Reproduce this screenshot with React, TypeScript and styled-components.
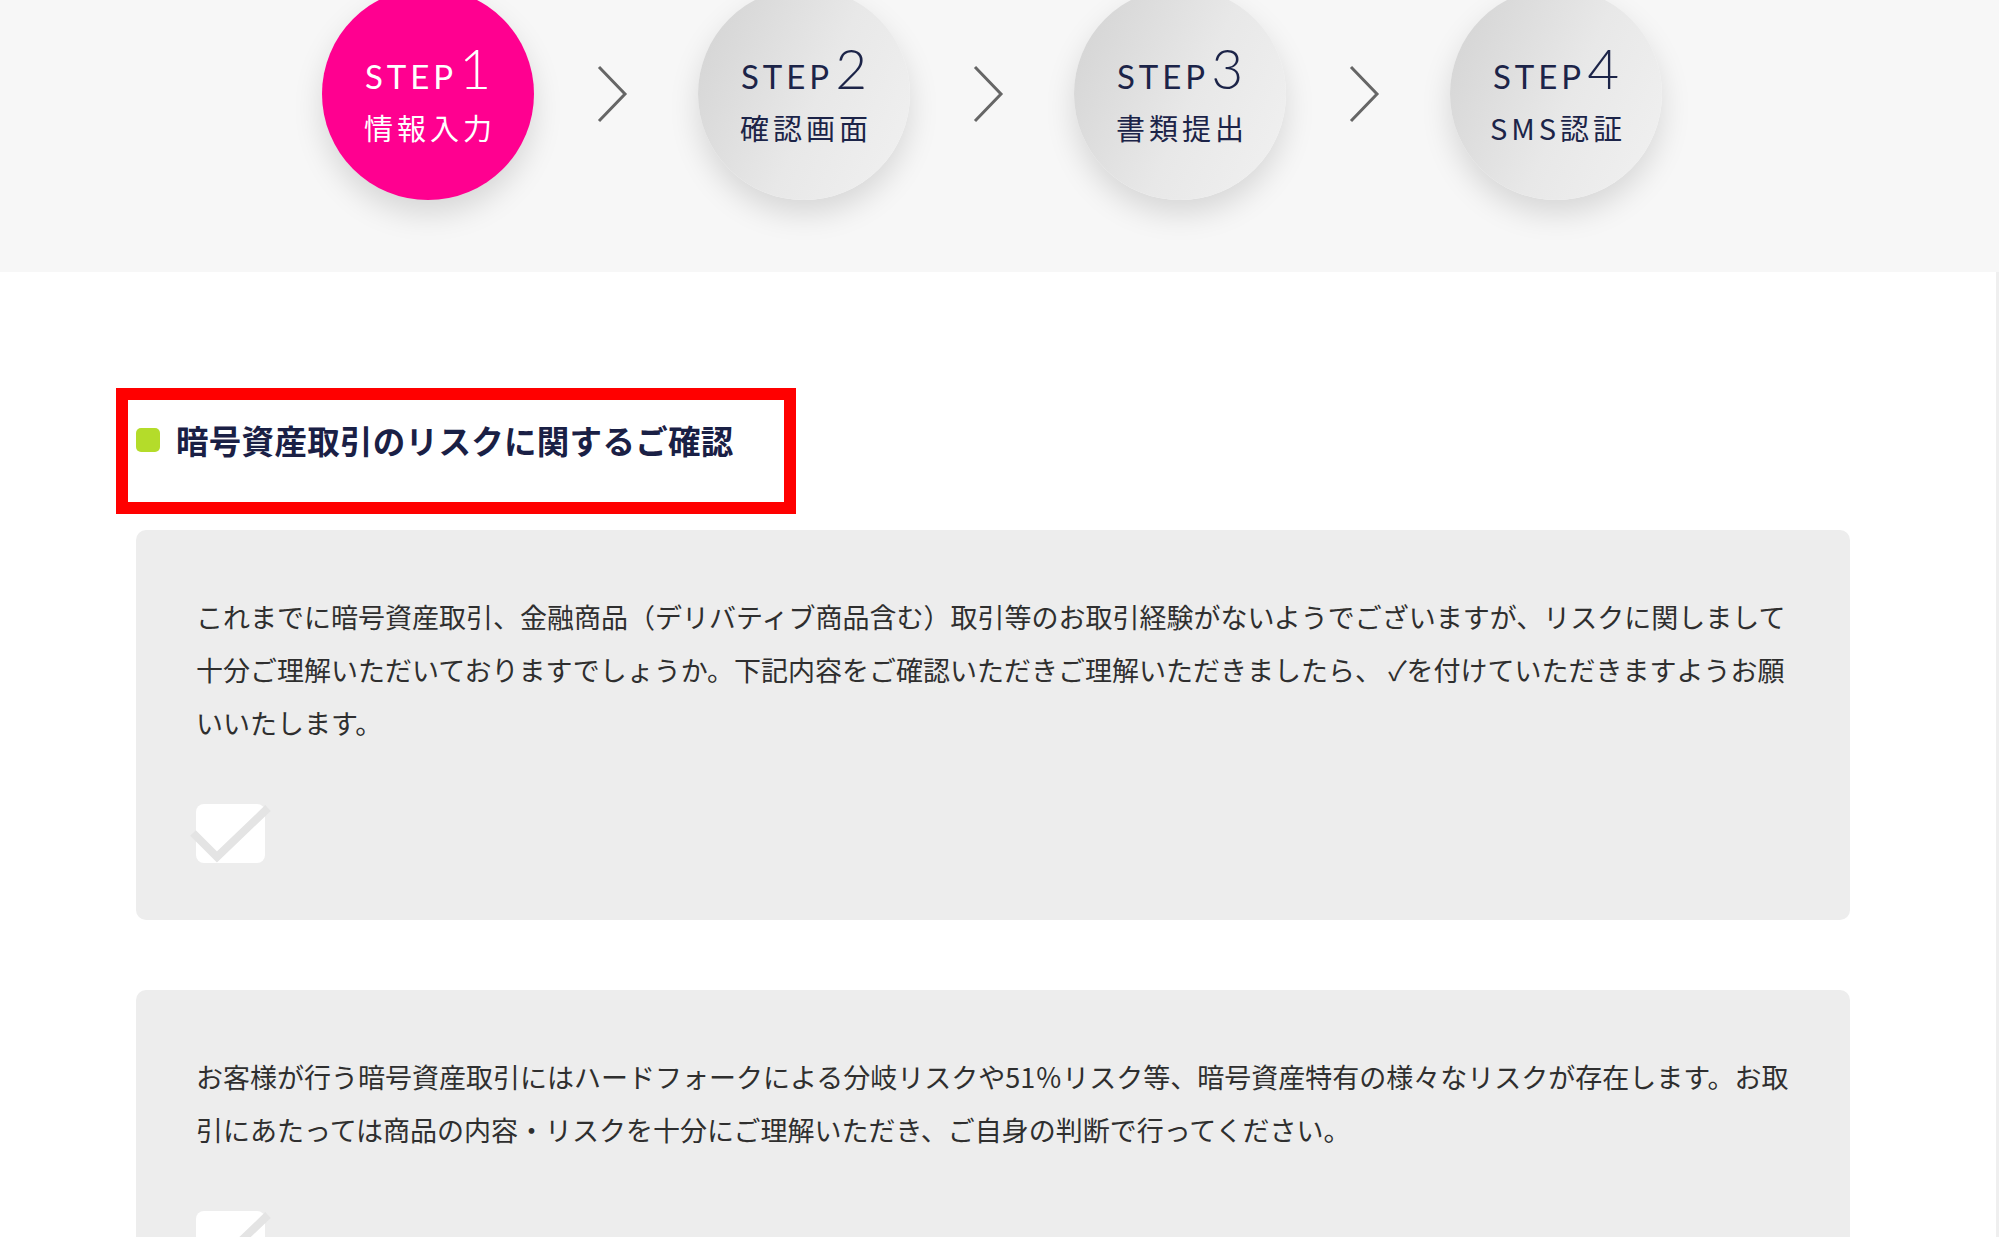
import styled, { createGlobalStyle } from "styled-components";

const GlobalStyle = createGlobalStyle`
  html, body {
    margin: 0;
    padding: 0;
    background: #ffffff;
    font-family: "Noto Sans CJK JP", "Noto Sans", sans-serif;
    color: #333333;
  }
`;

const steps = [
  { no: "1", label: "情報入力", active: true },
  { no: "2", label: "確認画面", active: false },
  { no: "3", label: "書類提出", active: false },
  { no: "4", label: "SMS認証", active: false },
];

const App = () => {
  return (
    <>
      <GlobalStyle />
      <Header>
        <StepRow>
          {steps.map((s, i) => (
            <StepGroup key={s.no}>
              {i > 0 && (
                <Arrow>
                  <svg width="32" height="58" viewBox="0 0 32 58">
                    <polyline points="3,2 29,29 3,56" fill="none" stroke="#666666" strokeWidth="3" />
                  </svg>
                </Arrow>
              )}
              <Circle $active={s.active}>
                <StepTitle>
                  <StepWord>STEP</StepWord>
                  <StepNo>{s.no}</StepNo>
                </StepTitle>
                <StepLabel>{s.label}</StepLabel>
              </Circle>
            </StepGroup>
          ))}
        </StepRow>
      </Header>

      <Main>
        <HeadingBox>
          <Dot />
          <Heading>暗号資産取引のリスクに関するご確認</Heading>
        </HeadingBox>

        <Card>
          <Text>
            これまでに暗号資産取引、金融商品（デリバティブ商品含む）取引等のお取引経験がないようでございますが、リスクに関しまして十分ご理解いただいておりますでしょうか。下記内容をご確認いただきご理解いただきましたら、 ✓を付けていただきますようお願いいたします。
          </Text>
          <Check />
        </Card>

        <Card>
          <Text>
            お客様が行う暗号資産取引にはハードフォークによる分岐リスクや51％リスク等、暗号資産特有の様々なリスクが存在します。お取引にあたっては商品の内容・リスクを十分にご理解いただき、ご自身の判断で行ってください。
          </Text>
          <Check />
        </Card>
      </Main>
    </>
  );
};

const Check = () => (
  <CheckBox>
    <svg width="80" height="66" viewBox="0 0 80 66">
      <polyline points="-3,29 21,53 72,4" fill="none" stroke="#e4e4e4" strokeWidth="8" />
    </svg>
  </CheckBox>
);

const Header = styled.header`
  height: 272px;
  background: #f7f7f7;
  overflow: hidden;
`;

const StepRow = styled.div`
  display: flex;
  justify-content: center;
  align-items: flex-start;
  padding-right: 15px;
  margin-top: -12px;
`;

const StepGroup = styled.div`
  display: flex;
  align-items: center;
`;

const Arrow = styled.div`
  width: 164px;
  height: 212px;
  display: flex;
  align-items: center;
  justify-content: center;
  padding-right: 8px;
  box-sizing: border-box;
`;

const Circle = styled.div<{ $active: boolean }>`
  width: 212px;
  height: 212px;
  border-radius: 50%;
  display: flex;
  flex-direction: column;
  align-items: center;
  justify-content: center;
  padding-bottom: 2px;
  box-sizing: border-box;
  color: ${(p) => (p.$active ? "#ffffff" : "#1c2448")};
  background: ${(p) =>
    p.$active ? "#ff0090" : "linear-gradient(115deg, #d2d2d2 0%, #e8e8e8 55%, #f1f1f1 100%)"};
  box-shadow: 0 14px 30px rgba(0, 0, 0, 0.13);
`;

const StepTitle = styled.div`
  display: flex;
  align-items: baseline;
  font-family: "Lato", "Inter", sans-serif;
  line-height: 1;
  height: 46px;
`;

const StepWord = styled.span`
  font-size: 33px;
  font-weight: 400;
  letter-spacing: 4px;
`;

const StepNo = styled.span`
  font-size: 55px;
  font-weight: 300;
  margin-left: 2px;
`;

const StepLabel = styled.div`
  margin-top: 22px;
  font-size: 29px;
  letter-spacing: 4px;
  line-height: 36px;
  padding-left: 4px;
`;

const Main = styled.main`
  width: 1996px;
  border-right: 3px solid #efefef;
  padding: 116px 0 60px;
  min-height: 965px;
  box-sizing: content-box;
`;

const HeadingBox = styled.div`
  margin-left: 116px;
  width: 680px;
  height: 126px;
  border: 12px solid #ff0000;
  box-sizing: border-box;
  display: flex;
  align-items: center;
  padding: 0 0 22px 8px;
`;

const Dot = styled.span`
  width: 24px;
  height: 24px;
  border-radius: 5px;
  background: #b4dc2a;
  flex-shrink: 0;
`;

const Heading = styled.h2`
  margin: 0 0 0 16px;
  font-size: 32.5px;
  letter-spacing: 0.3px;
  line-height: 40px;
  font-weight: 700;
  color: #1a2045;
`;

const Card = styled.section`
  margin: 16px 0 70px 136px;
  width: 1714px;
  box-sizing: border-box;
  background: #ededed;
  border-radius: 10px;
  padding: 60px 60px 57px;
`;

const Text = styled.p`
  margin: 0;
  font-size: 27px;
  line-height: 53px;
  color: #2f2f2f;
`;

const CheckBox = styled.div`
  margin-top: 55px;
  width: 69px;
  height: 59px;
  border-radius: 8px;
  background: #ffffff;
  position: relative;

  svg {
    position: absolute;
    left: 0;
    top: 0;
    overflow: visible;
  }
`;

export default App;
